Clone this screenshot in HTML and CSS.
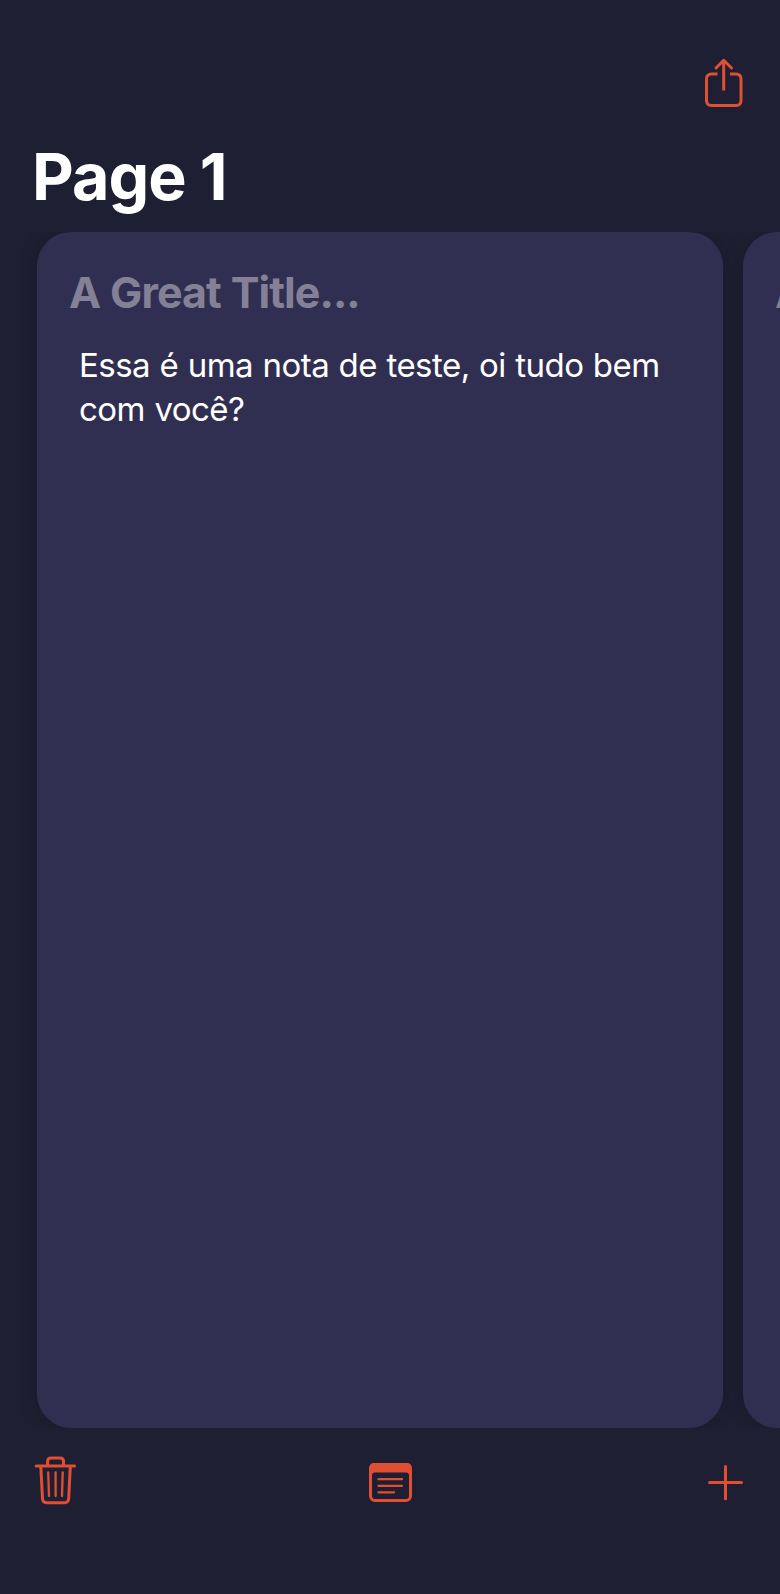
FILE: index.html
```html
<!DOCTYPE html>
<html lang="pt">
<head>
<meta charset="utf-8">
<title>Page 1</title>
<link rel="stylesheet" href="styles.css">
</head>
<body>
<div class="screen">
  <header class="navbar">
    <svg class="icon" width="70" height="75" viewBox="0 0 70 75">
      <path d="M27.5 29H21.5Q16.500 29 16.500 34V55.500Q16.500 60.500 21.500 60.500H46Q51 60.500 51 55.500V34Q51 29 46 29H40"/>
      <path class="round" d="M33.700 44.200V15.500M26 23L33.700 15.300L41.500 23"/>
    </svg>
  </header>
  <h1 class="heading">Page 1</h1>
  <main class="pages">
    <article class="card">
      <h2 class="card-title">A Great Title...</h2>
      <p class="card-text">Essa é uma nota de teste, oi tudo bem<br>com você?</p>
    </article>
    <article class="card">
      <h2 class="card-title">A Great Title...</h2>
    </article>
  </main>
  <footer class="toolbar">
    <svg class="icon" width="80" height="80" viewBox="0 0 80 80">
      <path class="round" d="M16.200 26H54.600"/>
      <path d="M27.600 25.500V21.500Q27.600 18 31 18H40Q43.500 18 43.500 21.500V25.500M20.800 26.500L22.500 58.500Q22.700 62.700 26.600 62.700H44.500Q48.400 62.700 48.700 58.500L50.300 26.500"/>
      <path class="thin" d="M28.200 32.500L29 56M35.600 32.500V56M42.700 32.500L42 56"/>
    </svg>
    <svg class="icon" width="80" height="80" viewBox="0 0 80 80">
      <rect x="20.500" y="24.500" width="40" height="36" rx="4.500"/>
      <path class="solid" d="M19.200 36V28.300Q19.200 23 24.500 23H56.500Q61.800 23 61.800 28.300V36L59 35.500Q59 32.500 56 32.500H25Q22 32.500 22 35.500Z"/>
      <path class="thin" d="M28.500 39.200H52M28.500 45.800H52M28.500 52.300H44"/>
    </svg>
    <svg class="icon" width="80" height="80" viewBox="0 0 80 80">
      <path class="round" d="M19.500 42.600H51.500M35.500 26.500V58.700"/>
    </svg>
  </footer>
</div>
</body>
</html>
```
FILE: styles.css
```css
* { box-sizing: border-box; margin: 0; padding: 0; }

body {
  background: #1f1f33;
  color: #fff;
  font-family: Inter, "Liberation Sans", sans-serif;
}

.screen {
  display: flex;
  flex-direction: column;
  width: 780px;
  height: 1594px;
  overflow: hidden;
}

.navbar {
  display: flex;
  justify-content: flex-end;
  height: 137px;
  padding: 45px 20px 0;
}

.heading {
  height: 95px;
  padding-left: 32px;
  font-size: 64.5px;
  font-weight: 700;
  line-height: 80px;
  letter-spacing: -1px;
}

.pages {
  display: flex;
  flex: none;
  gap: 20px;
  height: 1196px;
  padding-left: 37px;
  overflow: hidden;
}

.card {
  flex: none;
  width: 686px;
  height: 1196px;
  padding: 34px 32px;
  border-radius: 34px;
  background: #312f51;
  box-shadow: 0 0 20px rgba(0, 0, 0, 0.2);
}

.card-title {
  color: #848197;
  font-size: 43px;
  font-weight: 700;
  line-height: 52px;
  letter-spacing: -0.95px;
  word-spacing: 0.7px;
  white-space: nowrap;
}

.card-text {
  padding: 25px 0 0 10px;
  font-size: 33px;
  line-height: 44px;
  letter-spacing: -0.53px;
  word-spacing: 0.7px;
  white-space: nowrap;
}

.toolbar {
  display: grid;
  grid-template-columns: 330px 340px 80px;
  padding: 12px 10px 0 20px;
}

.icon {
  flex: none;
  fill: none;
  stroke: #e04f31;
  stroke-width: 3;
}

.round { stroke-linecap: round; stroke-linejoin: round; }
.thin { stroke-width: 2.3; stroke-linecap: round; }
.solid { fill: #e04f31; stroke: none; }
```
